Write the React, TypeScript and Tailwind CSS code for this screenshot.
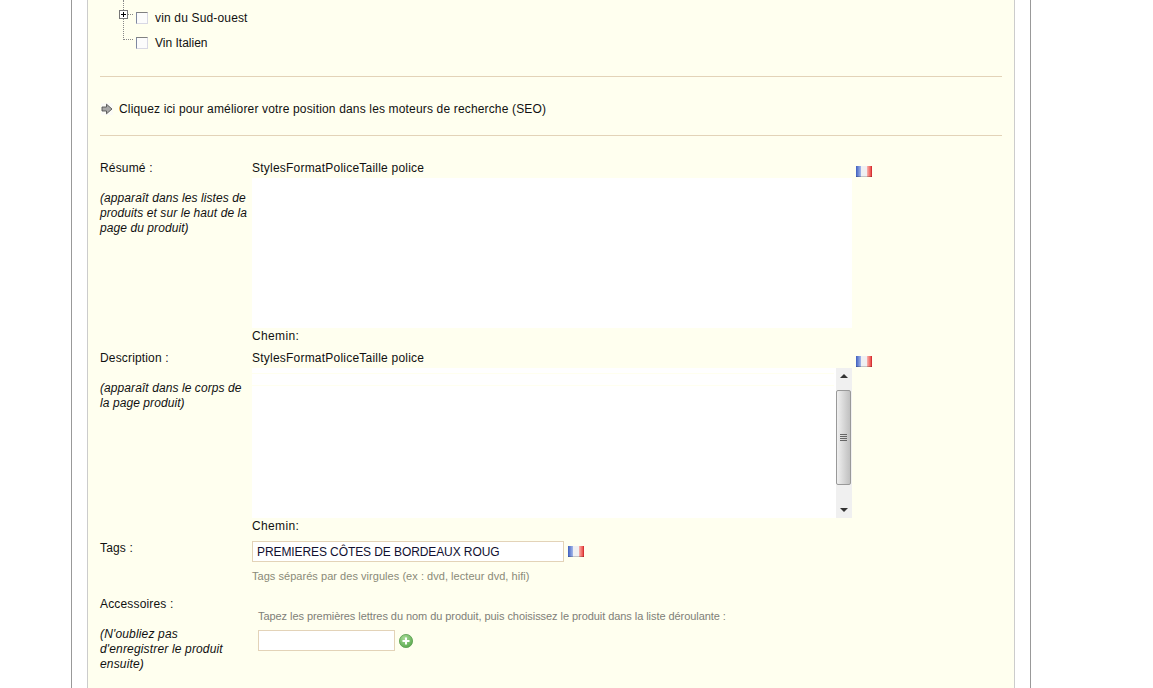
function Flag({ className }: { className?: string }) {
  return (
    <svg width="16" height="11" viewBox="0 0 16 11" className={className}>
      <defs>
        <linearGradient id="flagBlue" x1="0" y1="0" x2="1" y2="0">
          <stop offset="0" stopColor="#3f5fc0" />
          <stop offset="1" stopColor="#b9caf2" />
        </linearGradient>
        <linearGradient id="flagRed" x1="0" y1="0" x2="1" y2="0">
          <stop offset="0" stopColor="#f9b4ae" />
          <stop offset="0.7" stopColor="#ee5a55" />
          <stop offset="1" stopColor="#c81e28" />
        </linearGradient>
      </defs>
      <rect width="6" height="11" fill="url(#flagBlue)" />
      <rect x="5" width="6" height="11" fill="#f0f0f2" />
      <rect x="11" width="5" height="11" fill="url(#flagRed)" />
      <rect x="0" y="10" width="16" height="1" fill="#000" opacity="0.18" />
    </svg>
  );
}

function Checkbox() {
  return (
    <span className="block h-[12px] w-[12px] border border-[#808080] border-l-[#7f88a0] border-r-[#d8d8e4] border-b-[#d8d8e4] bg-[#fcfcfc]" />
  );
}

function Editor({ scrollbar }: { scrollbar?: boolean }) {
  return (
    <div className="w-[600px]">
      <div className="h-[18px] leading-[17px] tracking-[0.22px]">StylesFormatPoliceTaille police</div>
      <div className="relative flex h-[150px] bg-white">
        {scrollbar && (
          <>
            <div className="flex-1 pt-[5px]">
              <div className="h-px bg-[#ffffef]" />
              <div className="mt-[11px] h-px bg-[#ffffef]" />
            </div>
            <div className="relative ml-[2px] flex w-[16px] flex-col items-center justify-between bg-[#f0f0f0] py-[6px]">
              <span className="h-0 w-0 border-x-[4px] border-b-[4px] border-x-transparent border-b-[#333]" />
              <span className="absolute left-0 top-[22px] flex h-[95px] w-[15px] items-center justify-center rounded-[2px] border border-[#999] bg-gradient-to-r from-[#f0f0f0] to-[#c0c0c0]">
                <span className="flex w-[7px] flex-col gap-[1px]">
                  <span className="h-px bg-[#666]" />
                  <span className="h-px bg-[#666]" />
                  <span className="h-px bg-[#666]" />
                  <span className="h-px bg-[#666]" />
                </span>
              </span>
              <span className="h-0 w-0 border-x-[4px] border-t-[4px] border-x-transparent border-t-[#333]" />
            </div>
          </>
        )}
      </div>
      <div className="h-[18px] pt-[1px] leading-[14px] tracking-[0.35px]">Chemin:</div>
    </div>
  );
}

function EditorRow({ label, note, scrollbar }: { label: string; note: string[]; scrollbar?: boolean }) {
  return (
    <div className="flex h-[190px]">
      <div className="w-[152px] pt-[1px]">
        <div className="h-[15px] leading-[15px]">{label}</div>
        <div className="mt-[15px] italic leading-[15px] tracking-[0.08px]">
          {note.map((line) => (
            <div key={line}>{line}</div>
          ))}
        </div>
      </div>
      <Editor scrollbar={scrollbar} />
      <Flag className="ml-[4px] mt-[6px]" />
    </div>
  );
}

export default function App() {
  return (
    <div className="h-[688px] overflow-hidden bg-white font-['Liberation_Sans',Arial,sans-serif] text-[12px] tracking-[0.16px] text-[#111]">
      <div className="ml-[71px] h-full w-[960px] border-x border-[#999] px-[15px]">
        <div className="h-full border-x border-[#ccc] bg-[#ffffef] pl-[12px] pr-[12px]">
          <div className="relative h-[76px]">
            {/* tree lines */}
            <span className="absolute left-[23px] top-0 h-[40px] border-l border-dotted border-[#888]" />
            <span className="absolute left-[23px] top-[39px] w-[10px] border-t border-dotted border-[#888]" />
            <span className="absolute left-[28px] top-[14px] w-[5px] border-t border-dotted border-[#888]" />
            <span className="absolute left-[19px] top-[10px] flex h-[9px] w-[9px] items-center justify-center border border-[#777] bg-white">
              <span className="absolute h-px w-[5px] bg-black" />
              <span className="absolute h-[5px] w-px bg-black" />
            </span>
            <div className="flex h-[25px] items-center gap-[7px] pl-[36px] pt-[10px]">
              <Checkbox />
              <span>vin du Sud-ouest</span>
            </div>
            <div className="flex h-[25px] items-center gap-[7px] pl-[36px] pt-[10px]">
              <Checkbox />
              <span className="tracking-normal">Vin Italien</span>
            </div>
          </div>

          <div className="flex h-[60px] items-center gap-[6px] border-y border-[#e3d3b8] pt-[5px]">
            <svg width="12" height="12" viewBox="0 0 12 12" className="ml-[1px] bg-[#fbfbf6]">
              <path d="M1 4h4.5V1.2L11 6l-5.5 4.8V8H1z" fill="#a8a8a8" stroke="#444" strokeWidth="0.8" />
            </svg>
            <span>Cliquez ici pour améliorer votre position dans les moteurs de recherche (SEO)</span>
          </div>

          <div className="pt-[24px]">
            <EditorRow
              label="Résumé :"
              note={["(apparaît dans les listes de", "produits et sur le haut de la", "page du produit)"]}
            />
            <EditorRow
              label="Description :"
              note={["(apparaît dans le corps de", "la page produit)"]}
              scrollbar
            />
          </div>

          <div className="flex h-[56px]">
            <div className="w-[152px] pt-[1px] leading-[15px]">Tags :</div>
            <div className="pt-[1px]">
              <div className="flex items-center gap-[4px]">
                <div className="flex h-[21px] w-[312px] items-center border border-[#e3d3b8] bg-white px-[4px] tracking-[-0.09px] text-[#110f30]">
                  PREMIERES CÔTES DE BORDEAUX ROUG
                </div>
                <Flag />
              </div>
              <div className="mt-[7px] text-[11px] leading-[14px] tracking-[0.04px] text-[#8a8a78]">
                Tags séparés par des virgules (ex : dvd, lecteur dvd, hifi)
              </div>
            </div>
          </div>

          <div className="flex">
            <div className="w-[152px] pt-[1px]">
              <div className="h-[15px] leading-[15px]">Accessoires :</div>
              <div className="mt-[15px] italic leading-[15px]">
                <div>(N'oubliez pas</div>
                <div>d'enregistrer le produit</div>
                <div>ensuite)</div>
              </div>
            </div>
            <div className="pl-[6px] pt-[13px]">
              <div className="text-[11px] leading-[14px] tracking-[-0.06px] text-[#808078]">
                Tapez les premières lettres du nom du produit, puis choisissez le produit dans la liste déroulante :
              </div>
              <div className="mt-[7px] flex items-center gap-[4px]">
                <div className="h-[21px] w-[137px] border border-[#e3d3b8] bg-white" />
                <svg width="14" height="14" viewBox="0 0 14 14" className="mt-[1px]">
                  <defs>
                    <radialGradient id="plusGreen" cx="0.4" cy="0.3" r="0.8">
                      <stop offset="0" stopColor="#a8dc98" />
                      <stop offset="1" stopColor="#55a548" />
                    </radialGradient>
                  </defs>
                  <circle cx="7" cy="7" r="6.6" fill="url(#plusGreen)" stroke="#5a9f50" strokeWidth="0.8" />
                  <path d="M7 3.5v7M3.5 7h7" stroke="#fff" strokeWidth="2" />
                </svg>
              </div>
            </div>
          </div>
        </div>
      </div>
    </div>
  );
}
